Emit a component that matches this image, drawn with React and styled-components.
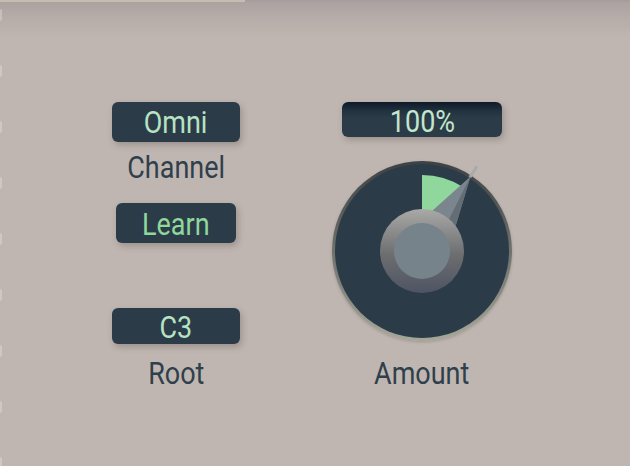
import React from "react";
import styled, { createGlobalStyle } from "styled-components";

const GlobalStyle = createGlobalStyle`
  html, body {
    margin: 0;
    padding: 0;
    background: #bfb6b1;
  }
  body {
    font-family: Roboto, "Open Sans", sans-serif;
  }
`;

const Page = styled.div`
  width: 630px;
  height: 466px;
  overflow: hidden;
  display: flex;
  flex-direction: column;
  background: linear-gradient(to bottom, #aaa1a0 0px, #b6adaa 18px, #bfb6b1 38px);
`;

const TopEdge = styled.div`
  height: 2px;
  flex: none;
  background: linear-gradient(to right, #c6bcb0 245px, #a69d9c 245px);
`;

const Body = styled.div`
  flex: 1;
  display: flex;
`;

const Rail = styled.div`
  width: 3px;
  flex: none;
  display: flex;
  flex-direction: column;
  gap: 44px;
  padding-top: 7px;
`;

const RailDot = styled.span`
  display: block;
  width: 2px;
  height: 12px;
  border-radius: 0 3px 3px 0;
  background: rgba(230, 225, 221, 0.4);
`;

const Content = styled.div`
  flex: 1;
  display: flex;
  align-items: flex-start;
  gap: 92px;
  padding: 100px 0 0 109px;
`;

const Column = styled.div`
  width: ${(p) => p.$width}px;
  display: flex;
  flex-direction: column;
  align-items: center;
`;

/* narrow face: the panel uses a condensed sans */
const Narrow = styled.span`
  display: inline-block;
  transform: scaleX(0.87);
  white-space: nowrap;
`;

const tones = {
  pale: "#b7e2c3",
  bright: "#8fd79c",
  mint: "#c3e6cd",
};

const Display = styled.div`
  width: ${(p) => p.$w}px;
  height: ${(p) => p.$h}px;
  margin-top: ${(p) => p.$mt || 0}px;
  box-sizing: border-box;
  padding-top: ${(p) => p.$pt || 0}px;
  display: flex;
  align-items: center;
  justify-content: center;
  border-radius: 6px;
  background: ${(p) =>
    p.$glass
      ? "linear-gradient(to bottom, #0e1927 0px, #22323f 9px, #2b3c48 16px)"
      : "#2b3c48"};
  box-shadow: 2px 3px 6px rgba(70, 50, 50, 0.28);
  color: ${(p) => tones[p.$tone || "pale"]};
  font-size: ${(p) => p.$size || 31}px;
  line-height: 1;
`;

const Label = styled.div`
  margin-top: ${(p) => p.$mt || 0}px;
  height: 34px;
  line-height: 34px;
  font-size: 31px;
  color: #2f3f4b;
`;

const KnobWrap = styled.div`
  margin-top: ${(p) => p.$mt || 0}px;
  width: 180px;
  height: 180px;
  border-radius: 50%;
  box-shadow: 0 1px 3px rgba(60, 50, 45, 0.25);
`;

const Knob = ({ angle = 33, mt }) => {
  const rad = (angle * Math.PI) / 180;
  const c = 90;
  const dir = [Math.sin(rad), -Math.cos(rad)];
  const perp = [Math.cos(rad), Math.sin(rad)];
  const xy = (r, off = 0) => [
    +(c + dir[0] * r + perp[0] * off).toFixed(1),
    +(c + dir[1] * r + perp[1] * off).toFixed(1),
  ];
  const pt = (r, off) => xy(r, off).join(",");
  const arcR = 76;
  const [lx1, ly1] = xy(88);
  const [lx2, ly2] = xy(101);
  return (
    <KnobWrap $mt={mt}>
      <svg width="180" height="180" viewBox="0 0 180 180">
        <defs>
          <linearGradient id="rim" x1="0" y1="0" x2="0" y2="1">
            <stop offset="0" stopColor="#3e4143" />
            <stop offset="0.5" stopColor="#6d706c" />
            <stop offset="1" stopColor="#a5a899" />
          </linearGradient>
          <linearGradient id="ring" x1="0" y1="0" x2="0" y2="1">
            <stop offset="0" stopColor="#a9a9a7" />
            <stop offset="0.55" stopColor="#6c6d6f" />
            <stop offset="1" stopColor="#4e5463" />
          </linearGradient>
        </defs>
        <circle cx={c} cy={c} r="90" fill="url(#rim)" />
        <circle cx={c} cy={c} r="87" fill="#2b3c48" />
        <path
          d={`M${c},${c} L${c},${c - arcR} A${arcR},${arcR} 0 0 1 ${pt(arcR)} Z`}
          fill="#8fd79c"
        />
        <line x1={lx1} y1={ly1} x2={lx2} y2={ly2} stroke="#aaaba7" strokeWidth="3" />
        <polygon points={`${pt(0, -24)} ${pt(0, 26)} ${pt(89)}`} fill="#7b858d" />
        <polygon points={`${pt(0, 10)} ${pt(0, 26)} ${pt(89)}`} fill="#626d75" />
        <circle cx={c} cy={c} r="42" fill="url(#ring)" />
        <circle cx={c} cy={c} r="28" fill="#76838b" />
      </svg>
    </KnobWrap>
  );
};

export default function App() {
  return (
    <>
      <GlobalStyle />
      <Page>
        <TopEdge />
        <Body>
          <Rail>
            {Array.from({ length: 9 }).map((_, i) => (
              <RailDot key={i} />
            ))}
          </Rail>
          <Content>
            <Column $width={128}>
              <Display $w={128} $h={40} $tone="pale">
                <Narrow>Omni</Narrow>
              </Display>
              <Label $mt={9}>
                <Narrow>Channel</Narrow>
              </Label>
              <Display $w={120} $h={40} $mt={18} $tone="bright" $pt={2}>
                <Narrow>Learn</Narrow>
              </Display>
              <Display $w={128} $h={36} $mt={65} $tone="pale" $pt={2}>
                <Narrow>C3</Narrow>
              </Display>
              <Label $mt={13}>
                <Narrow>Root</Narrow>
              </Label>
            </Column>
            <Column $width={180}>
              <Display $w={160} $h={35} $glass $tone="mint" $pt={3}>
                <Narrow>100%</Narrow>
              </Display>
              <Knob angle={33} mt={24} />
              <Label $mt={16}>
                <Narrow>Amount</Narrow>
              </Label>
            </Column>
          </Content>
        </Body>
      </Page>
    </>
  );
}
